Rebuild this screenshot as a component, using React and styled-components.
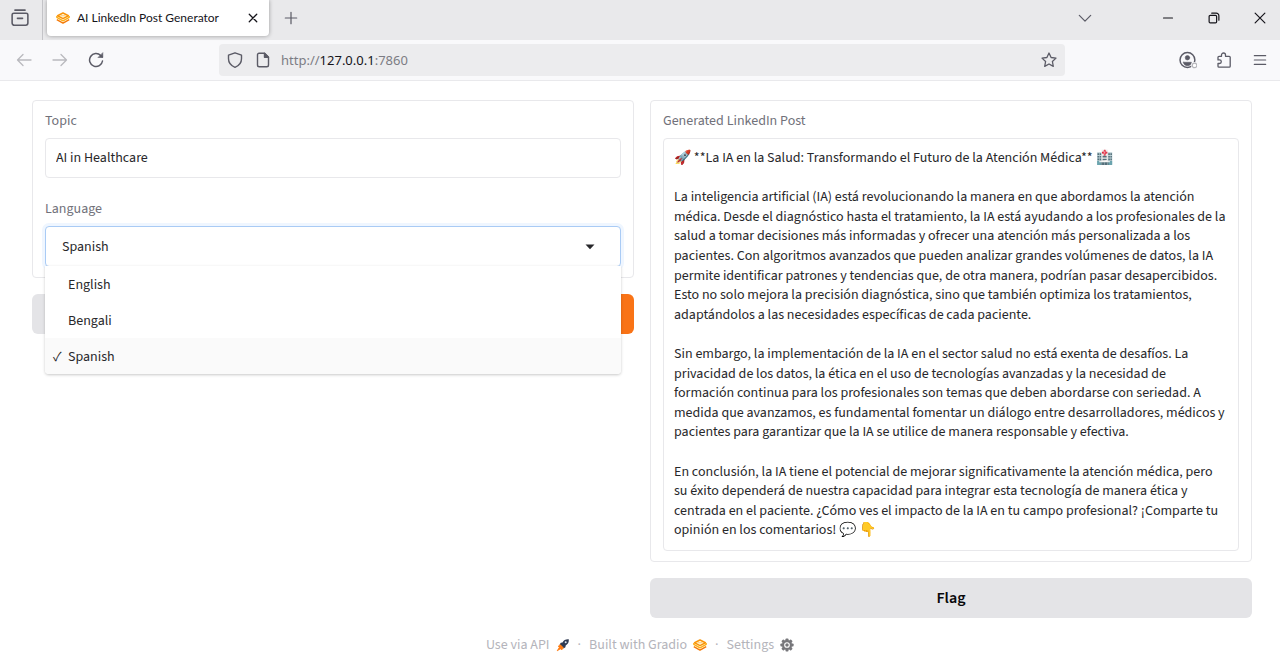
import React, { useState } from "react";
import styled, { createGlobalStyle, css } from "styled-components";

const sourceFont = '"Source Sans 3", "Noto Sans CJK SC", "Noto Sans", sans-serif';
const chromeFont = '"Noto Sans", "Open Sans", sans-serif';

const GlobalStyle = createGlobalStyle`
  *, *::before, *::after { box-sizing: border-box; }
  body { margin: 0; background: #fff; color: #27272a; font: 14px/20px ${sourceFont}; }
  button, input, textarea, select { font: inherit; color: inherit; }
`;

const TabStrip = styled.div`
  display: flex;
  align-items: center;
  height: 40px;
  background: #e9e9eb;
`;

const IconButton = styled.button`
  display: grid;
  place-items: center;
  flex: none;
  width: ${(p) => p.$width || 36}px;
  height: 32px;
  padding: 0;
  border: 0;
  background: none;
  color: ${(p) => p.$color || "#5b5b66"};
`;

const ViewButtonCell = styled.div`
  display: flex;
  align-items: center;
  height: 40px;
  padding: 0 4px 4px 2px;
  border-right: 1px solid #c4c4c8;
`;

const Tab = styled.div`
  display: flex;
  align-items: center;
  gap: 7px;
  width: 222px;
  height: 36px;
  margin: 0 4px 4px;
  padding-left: 9px;
  border-radius: 0 0 4px 4px;
  background: #fff;
  box-shadow: 0 0 4px rgba(0, 0, 0, 0.35);
  color: #15141a;
  font: 12px/20px Lato, ${chromeFont};
`;

const TabTitle = styled.span`
  flex: 1;
  white-space: nowrap;
`;

const StripGroup = styled.div`
  display: flex;
  align-items: center;
  padding-bottom: 4px;
`;

const WindowControls = styled(StripGroup)`
  gap: 6px;
  margin-left: 45px;
`;

const StripSpacer = styled.div`
  flex: 1;
`;

const NavBar = styled.div`
  display: flex;
  align-items: center;
  height: 41px;
  padding: 0 2px 1px 6px;
  background: #f9f9fb;
  border-bottom: 1px solid #e9e9ec;
`;

const NavGroup = styled.div`
  display: flex;
  flex: 1;
  justify-content: ${(p) => (p.$end ? "flex-end" : "flex-start")};
`;

const UrlBar = styled.div`
  display: flex;
  align-items: center;
  flex: 0 1 846px;
  height: 32px;
  padding: 0 0 0 2px;
  border-radius: 4px;
  background: #ececee;
`;

const UrlLabel = styled.label`
  display: flex;
  flex: 1;
  padding-left: 4px;
  color: #7c7c84;
  font: 13px/20px ${chromeFont};
`;

const UrlHost = styled.input`
  field-sizing: content;
  padding: 0;
  border: 0;
  outline: 0;
  background: none;
  color: #15141a;
`;

const Page = styled.main`
  display: grid;
  grid-template-columns: 1fr 1fr;
  align-items: start;
  gap: 16px;
  padding: 19px 28px 17px 32px;
`;

const Column = styled.section`
  display: flex;
  flex-direction: column;
  gap: 16px;
`;

const Panel = styled.div`
  display: flex;
  flex-direction: column;
  gap: 21px;
  padding: 10px 12px;
  border: 1px solid #e8e8eb;
  border-radius: 4px;
`;

const Field = styled.div`
  position: relative;
  display: flex;
  flex-direction: column;
  gap: 7px;
`;

const FieldLabel = styled.label`
  color: #71717a;
`;

const box = css`
  width: 100%;
  border: 1px solid #e8e8eb;
  border-radius: 4px;
  background: #fff;
  outline: 0;
`;

const TextInput = styled.input`
  ${box}
  height: 40px;
  padding: 0 10px;
`;

const SelectInput = styled.select`
  ${box}
  height: 41px;
  padding: 0 16px;
  appearance: none;
  border-color: #a9cbf5;
  box-shadow: 0 0 0 3px #eff6ff;
`;

const Caret = styled.svg`
  position: absolute;
  right: 26px;
  bottom: 17px;
  pointer-events: none;
`;

const Menu = styled.ul`
  position: absolute;
  z-index: 2;
  top: 100%;
  left: 0;
  right: 0;
  margin: -1px 0 0;
  padding: 0;
  list-style: none;
  background: #fff;
  border-radius: 0 0 4px 4px;
  box-shadow: 0 1px 3px rgba(0, 0, 0, 0.22);
  overflow: hidden;
`;

const MenuItem = styled.li`
  display: flex;
  align-items: center;
  height: 36px;
  padding: 2px 8px 0;
  background: ${(p) => (p["aria-selected"] ? "#fafafa" : "#fff")};
`;

const Tick = styled.span`
  width: 15px;
  visibility: ${(p) => (p.$on ? "visible" : "hidden")};
`;

const Output = styled.textarea`
  ${box}
  display: block;
  field-sizing: content;
  padding: 10px 10px 9px;
  line-height: 1.4;
  resize: none;
  overflow: hidden;
`;

const ButtonRow = styled.div`
  display: grid;
  grid-template-columns: 1fr 1fr;
  gap: 16px;
`;

const ActionButton = styled.button`
  height: 40px;
  border: 0;
  border-radius: 6px;
  background: ${(p) => (p.$primary ? "#f97316" : "#e4e4e7")};
  color: ${(p) => (p.$primary ? "#fff" : "#09090b")};
  font-size: 16px;
  font-weight: 600;
`;

const Footer = styled.footer`
  display: flex;
  justify-content: center;
  gap: 8px;
  color: #b4b4bb;
`;

const FooterLink = styled.a`
  display: flex;
  align-items: center;
  gap: 6px;
  color: inherit;
  text-decoration: none;
`;

const Line = ({ size = 16, width = 1.3, children, ...rest }) => (
  <svg width={size} height={size} viewBox="0 0 16 16" fill="none" stroke="currentColor" strokeWidth={width} strokeLinecap="round" strokeLinejoin="round" aria-hidden="true" {...rest}>
    {children}
  </svg>
);

const GradioLogo = () => (
  <svg width="14" height="14" viewBox="0 0 14 14" fill="none" strokeLinejoin="round" aria-hidden="true">
    <path d="M.8 8.700 7 12.100l6.200-3.400" stroke="#f57a08" strokeWidth="1.500" />
    <path d="M.8 4.900v1.500L7 9.900l6.200-3.500V4.900" stroke="#fcae14" strokeWidth="1.300" />
    <path d="M7 2 1.600 4.800 7 7.600l5.400-2.800z" fill="#fff" stroke="#f9960c" strokeWidth="1.600" />
    <path d="M4.500 4.800h5" stroke="#fcc65a" strokeWidth="1" />
  </svg>
);

const FooterRocket = () => (
  <svg width="14" height="14" viewBox="0 0 14 14" aria-hidden="true">
    <path d="M12.800 1.200c-3-.3-5 .9-6.300 3.200L4.800 4.700 3.600 6.500l3.900 3.900 1.900-1.200.3-1.800c2.300-1.300 3.400-3.200 3.100-6.200z" fill="#2f3b52" />
    <path d="M4.300 6.700 7.300 9.700 5.600 12 4.600 10.700 1.200 12.800 3.300 9.400 2.200 8.300z" fill="#ff7b10" stroke="#ff7b10" strokeWidth=".8" />
    <circle cx="9.700" cy="4.300" r="1" fill="#dbe4ee" />
  </svg>
);

const Gear = () => (
  <svg width="14" height="14" viewBox="0 0 14 14" aria-hidden="true">
    <g fill="#77777b">
      <circle cx="7" cy="7" r="5" />
      {[0, 45, 90, 135].map((a) => (
        <rect key={a} x="5.500" y=".4" width="3" height="13.200" rx=".8" transform={`rotate(${a} 7 7)`} />
      ))}
    </g>
    <circle cx="7" cy="7" r="2.300" fill="#77777b" stroke="#fff" strokeWidth="1.100" />
  </svg>
);

const languages = ["English", "Bengali", "Spanish"];

const post = `🚀 **La IA en la Salud: Transformando el Futuro de la Atención Médica** 🏥

La inteligencia artificial (IA) está revolucionando la manera en que abordamos la atención médica. Desde el diagnóstico hasta el tratamiento, la IA está ayudando a los profesionales de la salud a tomar decisiones más informadas y ofrecer una atención más personalizada a los pacientes. Con algoritmos avanzados que pueden analizar grandes volúmenes de datos, la IA permite identificar patrones y tendencias que, de otra manera, podrían pasar desapercibidos. Esto no solo mejora la precisión diagnóstica, sino que también optimiza los tratamientos, adaptándolos a las necesidades específicas de cada paciente.

Sin embargo, la implementación de la IA en el sector salud no está exenta de desafíos. La privacidad de los datos, la ética en el uso de tecnologías avanzadas y la necesidad de formación continua para los profesionales son temas que deben abordarse con seriedad. A medida que avanzamos, es fundamental fomentar un diálogo entre desarrolladores, médicos y pacientes para garantizar que la IA se utilice de manera responsable y efectiva.

En conclusión, la IA tiene el potencial de mejorar significativamente la atención médica, pero su éxito dependerá de nuestra capacidad para integrar esta tecnología de manera ética y centrada en el paciente. ¿Cómo ves el impacto de la IA en tu campo profesional? ¡Comparte tu opinión en los comentarios! 💬 👇`;

export default function App() {
  const [topic, setTopic] = useState("AI in Healthcare");
  const [language, setLanguage] = useState("Spanish");
  const [open, setOpen] = useState(true);
  const [host, setHost] = useState("127.0.0.1");

  return (
    <>
      <GlobalStyle />
      <header>
        <TabStrip>
          <ViewButtonCell>
            <IconButton aria-label="Firefox View">
              <Line size={18} width={1.4}>
                <path d="M3.500 1h9M2.500 3.700h11a1.500 1.500 0 0 1 1.500 1.500v7.300a2 2 0 0 1-2 2H3a2 2 0 0 1-2-2V5.200a1.500 1.500 0 0 1 1.500-1.500zM5.700 8.300h4.600" />
              </Line>
            </IconButton>
          </ViewButtonCell>
          <Tab>
            <GradioLogo />
            <TabTitle>AI LinkedIn Post Generator</TabTitle>
            <IconButton aria-label="Close tab" $width={32} $color="#15141a">
              <Line size={10} width={2}><path d="M2 2l12 12M14 2 2 14" /></Line>
            </IconButton>
          </Tab>
          <StripGroup>
            <IconButton aria-label="New tab">
              <Line size={14} width={1.4}><path d="M8 1.500v13M1.500 8h13" /></Line>
            </IconButton>
          </StripGroup>
          <StripSpacer />
          <StripGroup>
            <IconButton aria-label="List all tabs">
              <Line size={14} width={1.4}><path d="M1.500 5 8 11.500 14.500 5" /></Line>
            </IconButton>
          </StripGroup>
          <WindowControls>
            <IconButton aria-label="Minimize" $width={40} $color="#15141a">
              <Line size={12} width={1.5}><path d="M2 8h12" /></Line>
            </IconButton>
            <IconButton aria-label="Restore" $width={40} $color="#15141a">
              <Line size={12} width={1.6}><path d="M3 4.500h7a1.500 1.500 0 0 1 1.500 1.500v7a1.500 1.500 0 0 1-1.500 1.500H3A1.500 1.500 0 0 1 1.500 13V6A1.500 1.500 0 0 1 3 4.500zM5 1.500h6a3.500 3.500 0 0 1 3.500 3.500v6" /></Line>
            </IconButton>
            <IconButton aria-label="Close window" $width={40} $color="#15141a">
              <Line size={12} width={1.6}><path d="M1.500 1.500l13 13M14.500 1.500l-13 13" /></Line>
            </IconButton>
          </WindowControls>
        </TabStrip>
        <NavBar>
          <NavGroup>
            <IconButton aria-label="Back" $color="#b9b9be">
              <Line><path d="M15 8H1.500M7 2.500 1.500 8 7 13.500" /></Line>
            </IconButton>
            <IconButton aria-label="Forward" $color="#b9b9be">
              <Line><path d="M1 8h13.500M9 2.500 14.500 8 9 13.500" /></Line>
            </IconButton>
            <IconButton aria-label="Reload">
              <Line width={1.500}><path d="M14.500 9A6.500 6.500 0 1 1 12.700 3.500l1.500 1.500" /><path d="M14.800 1v4.500h-4.500z" fill="currentColor" strokeWidth=".6" /></Line>
            </IconButton>
          </NavGroup>
          <UrlBar>
            <IconButton aria-label="Site protections" $width={28}>
              <Line width={1.400}><path d="M8 .8 14.500 3.200v3.600c0 4-2.300 6.900-6.500 8.500C3.800 13.700 1.500 10.800 1.500 6.800V3.200z" /></Line>
            </IconButton>
            <IconButton aria-label="Site information" $width={28}>
              <Line width={1.400}><path d="M4 1.200h5.500l4 4V13a1.800 1.800 0 0 1-1.800 1.800H4.300A1.800 1.800 0 0 1 2.500 13V2.700A1.500 1.500 0 0 1 4 1.200z" /><path d="M9.500 1.200v4h4z" fill="currentColor" /></Line>
            </IconButton>
            <UrlLabel>
              http://
              <UrlHost aria-label="Address" value={host} onChange={(e) => setHost(e.target.value)} />
              :7860
            </UrlLabel>
            <IconButton aria-label="Bookmark this page" $width={32}>
              <Line><path d="M8 1l2.100 4.500 4.900.6-3.600 3.400.9 4.900L8 12l-4.300 2.400.9-4.900L1 6.100l4.900-.6z" /></Line>
            </IconButton>
          </UrlBar>
          <NavGroup $end>
            <IconButton aria-label="Account">
              <Line size={18}><circle cx="7.500" cy="8" r="6.600" /><circle cx="7.500" cy="6" r="2" fill="currentColor" strokeWidth=".5" /><path d="M4 10h7c0 2-1.500 3-3.500 3S4 12 4 10z" fill="currentColor" strokeWidth=".5" /><circle cx="13.800" cy="12.800" r="3" fill="#f9f9fb" stroke="none" /><circle cx="13.800" cy="12.800" r="2" fill="#fff" stroke="#b5b5ba" strokeWidth="1" /></Line>
            </IconButton>
            <IconButton aria-label="Extensions">
              <Line><path d="M5.500 4V3a2 2 0 0 1 4 0v1.300h3.700a1 1 0 0 1 1 1v8.900a1 1 0 0 1-1 1H3a1 1 0 0 1-1-1V11.500h1.500a1.800 1.800 0 0 0 0-3.600H2V5.300a1 1 0 0 1 1-1h2.500z" /></Line>
            </IconButton>
            <IconButton aria-label="Open application menu">
              <Line size={14}><path d="M1.500 3h13M1.500 8h13M1.500 13h13" /></Line>
            </IconButton>
          </NavGroup>
        </NavBar>
      </header>

      <Page>
        <Column>
          <Panel>
            <Field>
              <FieldLabel htmlFor="topic">Topic</FieldLabel>
              <TextInput id="topic" value={topic} onChange={(e) => setTopic(e.target.value)} />
            </Field>
            <Field>
              <FieldLabel htmlFor="language">Language</FieldLabel>
              <SelectInput
                id="language"
                value={language}
                onChange={(e) => setLanguage(e.target.value)}
                onMouseDown={(e) => { e.preventDefault(); setOpen(!open); }}
              >
                {languages.map((l) => <option key={l}>{l}</option>)}
              </SelectInput>
              <Caret width="10" height="6" viewBox="0 0 10 6" aria-hidden="true"><path d="M.5.5h9L5 5.200z" fill="#27272a" /></Caret>
              {open && (
                <Menu role="listbox" aria-label="Language options">
                  {languages.map((l) => (
                    <MenuItem key={l} role="option" aria-selected={l === language} onClick={() => { setLanguage(l); setOpen(false); }}>
                      <Tick $on={l === language}>✓</Tick>
                      {l}
                    </MenuItem>
                  ))}
                </Menu>
              )}
            </Field>
          </Panel>
          <ButtonRow>
            <ActionButton>Clear</ActionButton>
            <ActionButton $primary>Submit</ActionButton>
          </ButtonRow>
        </Column>
        <Column>
          <Panel>
            <Field>
              <FieldLabel htmlFor="post">Generated LinkedIn Post</FieldLabel>
              <Output id="post" readOnly value={post} />
            </Field>
          </Panel>
          <ActionButton>Flag</ActionButton>
        </Column>
      </Page>

      <Footer>
        <FooterLink href="#api">Use via API <FooterRocket /></FooterLink>
        <span>·</span>
        <FooterLink href="#gradio">Built with Gradio <GradioLogo /></FooterLink>
        <span>·</span>
        <FooterLink href="#settings">Settings <Gear /></FooterLink>
      </Footer>
    </>
  );
}
